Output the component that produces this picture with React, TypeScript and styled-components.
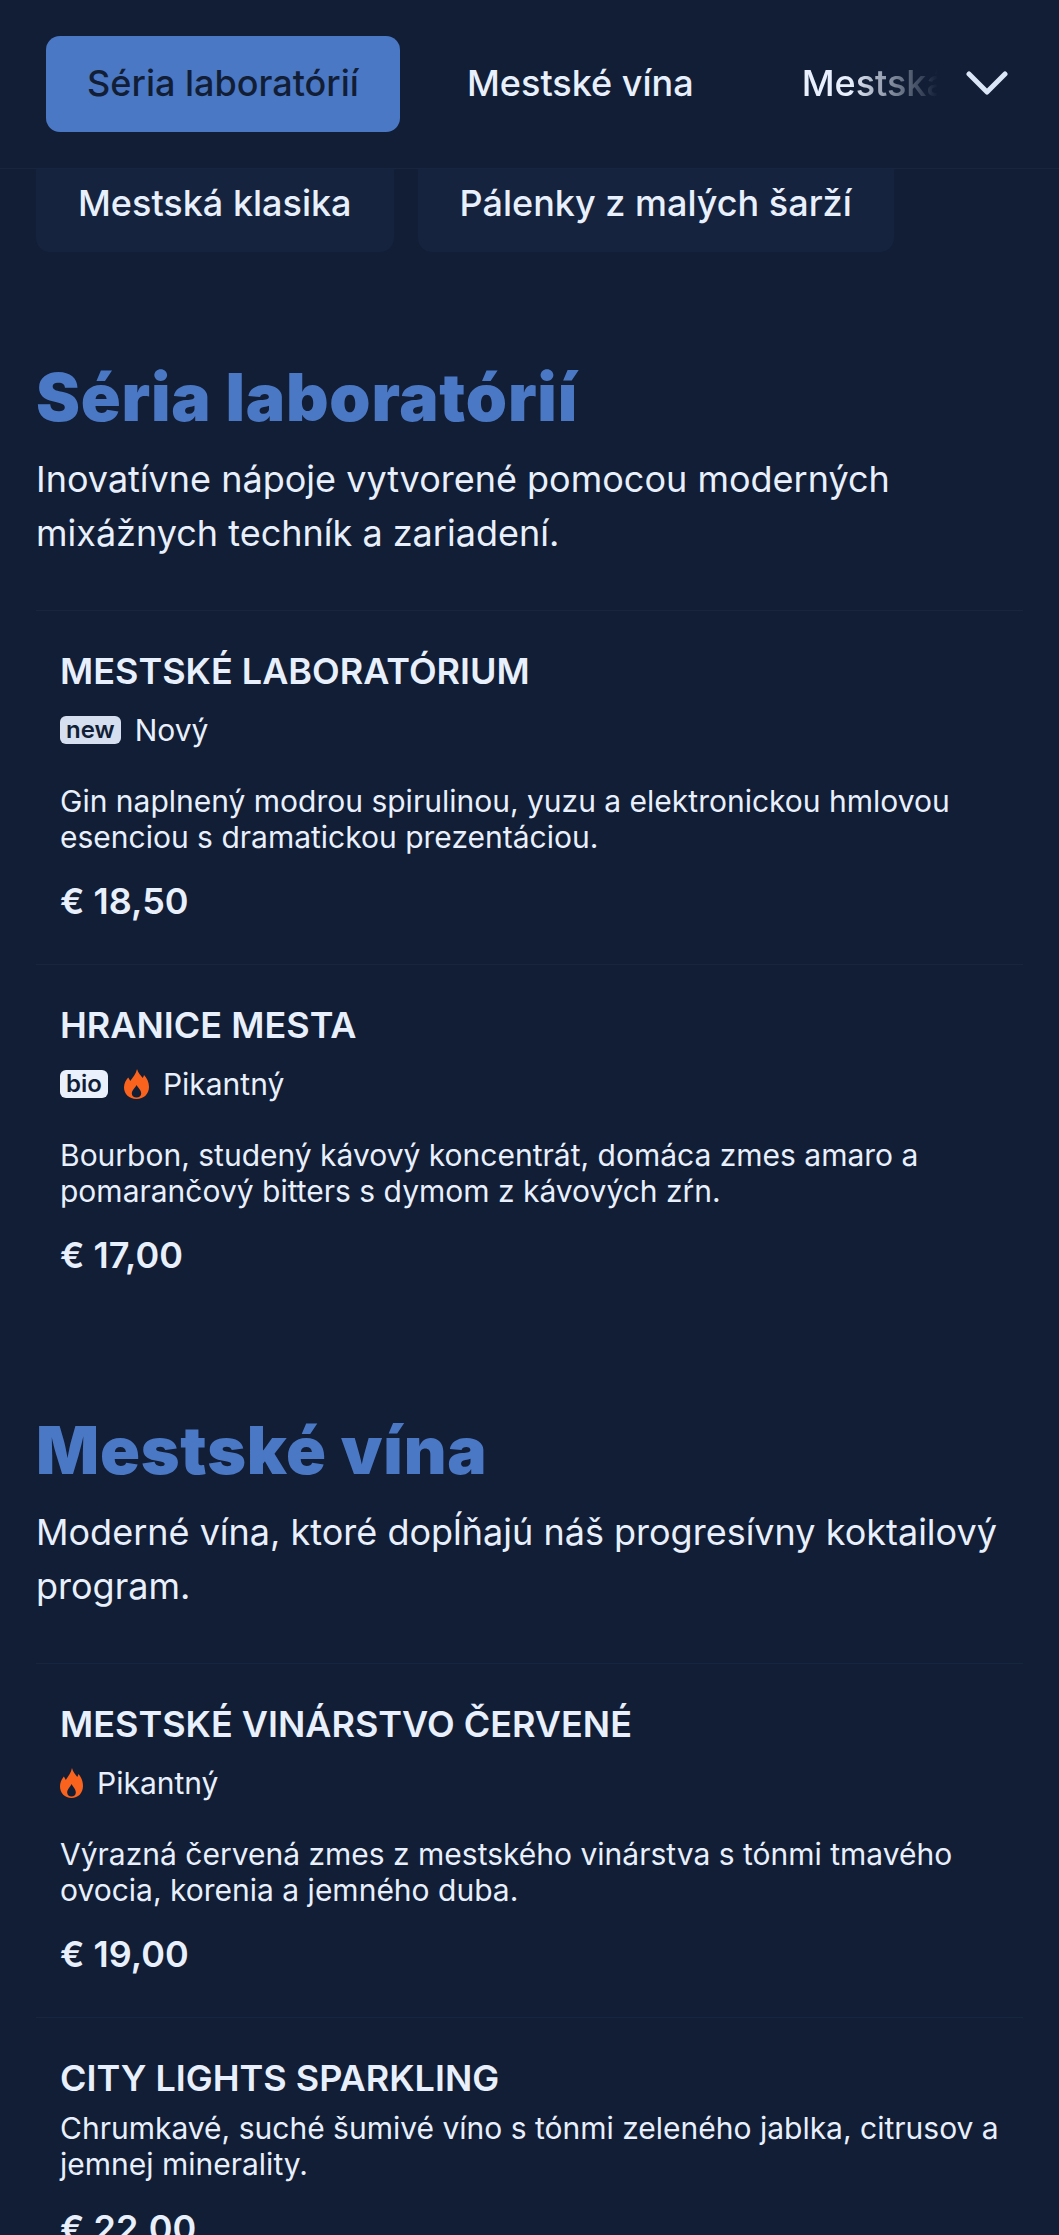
import React from 'react';
import styled, { createGlobalStyle } from 'styled-components';

interface ITag {
    label: string;
    light?: boolean;
}

interface IDrink {
    name: string;
    badge?: ITag;
    spicy?: boolean;
    note?: string;
    description: string;
    price: string;
}

const SECTIONS = [
    {
        title: 'Séria laboratórií',
        intro: 'Inovatívne nápoje vytvorené pomocou moderných mixážnych techník a zariadení.',
        drinks: [
            {
                name: 'MESTSKÉ LABORATÓRIUM',
                badge: { label: 'new' },
                note: 'Nový',
                description:
                    'Gin naplnený modrou spirulinou, yuzu a elektronickou hmlovou esenciou s dramatickou prezentáciou.',
                price: '€ 18,50',
            },
            {
                name: 'HRANICE MESTA',
                badge: { label: 'bio', light: true },
                spicy: true,
                note: 'Pikantný',
                description:
                    'Bourbon, studený kávový koncentrát, domáca zmes amaro a pomarančový bitters s dymom z kávových zŕn.',
                price: '€ 17,00',
            },
        ] as IDrink[],
    },
    {
        title: 'Mestské vína',
        intro: 'Moderné vína, ktoré dopĺňajú náš progresívny koktailový program.',
        drinks: [
            {
                name: 'MESTSKÉ VINÁRSTVO ČERVENÉ',
                spicy: true,
                note: 'Pikantný',
                description:
                    'Výrazná červená zmes z mestského vinárstva s tónmi tmavého ovocia, korenia a jemného duba.',
                price: '€ 19,00',
            },
            {
                name: 'CITY LIGHTS SPARKLING',
                description:
                    'Chrumkavé, suché šumivé víno s tónmi zeleného jablka, citrusov a jemnej minerality.',
                price: '€ 22,00',
            },
        ] as IDrink[],
    },
];

function Chevron(): React.JSX.Element {
    return (
        <ChevronIcon viewBox="0 0 42 24" fill="none">
            <path d="M3 3 L21 21 L39 3" stroke="#dbe6f7" strokeWidth="5" strokeLinecap="round" strokeLinejoin="round" />
        </ChevronIcon>
    );
}

function FlameIcon({ alone }: { alone: boolean }): React.JSX.Element {
    return (
        <Flame $alone={alone}>
            <svg viewBox="0 0 24 30" preserveAspectRatio="none">
                <path
                    fill="currentColor"
                    fillRule="evenodd"
                    d="M12.5 0 C13.5 4 16 6.5 18 9 C18.6 8 19 7 19.2 6 C22 9 24 13 24 18 C24 25 19 30 12 30 C5 30 0 25 0 18.5 C0 14 2 11 4 8.5 C5 10 5.6 11 6 12 C8.5 8.5 11.5 5 12.5 0 Z M12 16 C13.5 19 16.5 21 16.5 24.5 C16.5 27 14.5 28.5 12 28.5 C9.5 28.5 7.5 27 7.5 24.5 C7.5 21 10.5 19.5 12 16 Z"
                />
            </svg>
        </Flame>
    );
}

function Drink({ drink }: { drink: IDrink }): React.JSX.Element {
    const hasTags = drink.badge || drink.spicy || drink.note;
    return (
        <Item>
            <Name>{drink.name}</Name>
            {hasTags && (
                <Tags>
                    {drink.badge && <Badge $light={drink.badge.light}>{drink.badge.label}</Badge>}
                    {drink.spicy && <FlameIcon alone={!drink.badge} />}
                    {drink.note && <Note>{drink.note}</Note>}
                </Tags>
            )}
            <Description $spaced={!!hasTags}>{drink.description}</Description>
            <Price>{drink.price}</Price>
        </Item>
    );
}

function App(): React.JSX.Element {
    return (
        <Page>
            <GlobalStyle />
            <Header>
                <HeaderTabs>
                    <ActiveTab>Séria laboratórií</ActiveTab>
                    <HeaderTab>Mestské vína</HeaderTab>
                    <FadedTab>Mestská klasika</FadedTab>
                </HeaderTabs>
                <Chevron />
            </Header>
            <SecondRow>
                <RowTab>Mestská klasika</RowTab>
                <RowTab>Pálenky z malých šarží</RowTab>
            </SecondRow>
            {SECTIONS.map((section) => (
                <Section key={section.title}>
                    <Heading>{section.title}</Heading>
                    <Intro>{section.intro}</Intro>
                    {section.drinks.map((drink) => (
                        <Drink key={drink.name} drink={drink} />
                    ))}
                </Section>
            ))}
        </Page>
    );
}

const GlobalStyle = createGlobalStyle`
    html, body {
        margin: 0;
        height: 2235px;
        overflow: hidden;
        background: #121e36;
    }
`;

const Page = styled.div`
    height: 2235px;
    overflow: hidden;
    background: #121e36;
    color: #e8f0fd;
    font-family: 'Inter', sans-serif;
`;

const Header = styled.div`
    height: 169px;
    box-sizing: border-box;
    padding: 36px 51px 0 46px;
    display: flex;
    align-items: flex-start;
    justify-content: space-between;
    border-bottom: 1px solid #18253f;
    background: #121e36;
`;

const HeaderTabs = styled.div`
    display: flex;
    width: 900px;
    overflow: hidden;
`;

const BaseTab = styled.div`
    flex: none;
    height: 96px;
    box-sizing: border-box;
    padding: 0 42px 3px;
    display: flex;
    align-items: center;
    font-size: 36px;
    font-weight: 500;
    white-space: nowrap;
`;

const ActiveTab = styled(BaseTab)`
    width: 354px;
    justify-content: center;
    padding: 0 0 3px;
    background: #4a78c4;
    color: #121e36;
    border-radius: 14px;
`;

const HeaderTab = styled(BaseTab)`
    margin-left: 25px;
`;

const FadedTab = styled(BaseTab)`
    margin-left: 24px;
    mask-image: linear-gradient(to right, #000 0, #000 90px, transparent 178px);
`;

const ChevronIcon = styled.svg`
    width: 42px;
    height: 24px;
    margin-top: 35px;
    flex: none;
`;

const SecondRow = styled.div`
    height: 96px;
    padding: 0 36px;
    display: flex;
    gap: 24px;
    overflow: hidden;
`;

const RowTab = styled(BaseTab)`
    margin-top: -13px;
    background: #16233e;
    border-radius: 14px;
`;

const Section = styled.section`
    padding: 0 36px;
`;

const Heading = styled.h2`
    margin: 0;
    padding-top: 88px;
    font-family: 'Inter', sans-serif;
    font-size: 66px;
    font-weight: 900;
    letter-spacing: 0.8px;
    line-height: 88px;
    color: #4a78c4;
`;

const Intro = styled.p`
    margin: 11px 0 50px;
    font-size: 36px;
    line-height: 54px;
    color: #e8f0fd;
`;

const Item = styled.article`
    padding: 37px 24px 40px;
    border-top: 1px solid #18253f;
`;

const Name = styled.h3`
    margin: 0;
    font-size: 36px;
    font-weight: 600;
    line-height: 46px;
`;

const Tags = styled.div`
    display: flex;
    align-items: center;
    gap: 14px;
    margin-top: 15px;
    height: 42px;
`;

const Badge = styled.span<{ $light?: boolean }>`
    padding: 0 6px;
    height: 28px;
    line-height: 27px;
    border-radius: 6px;
    font-size: 24px;
    font-weight: 600;
    background: ${(props) => (props.$light ? '#eaf1fd' : '#d5dfef')};
    color: #121e36;
`;

const Flame = styled.span<{ $alone: boolean }>`
    display: flex;
    justify-content: flex-end;
    color: #f9631d;
    width: ${(props) => (props.$alone ? '23px' : '27px')};
    svg {
        width: ${(props) => (props.$alone ? '23px' : '25px')};
        height: 30px;
    }
`;

const Note = styled.span`
    font-size: 30px;
`;

const Description = styled.p<{ $spaced: boolean }>`
    margin: ${(props) => (props.$spaced ? '32px' : '9px')} 0 0;
    font-size: 30px;
    line-height: 36px;
`;

const Price = styled.div`
    margin-top: 23px;
    font-size: 36px;
    font-weight: 600;
    line-height: 46px;
`;

export default App;
